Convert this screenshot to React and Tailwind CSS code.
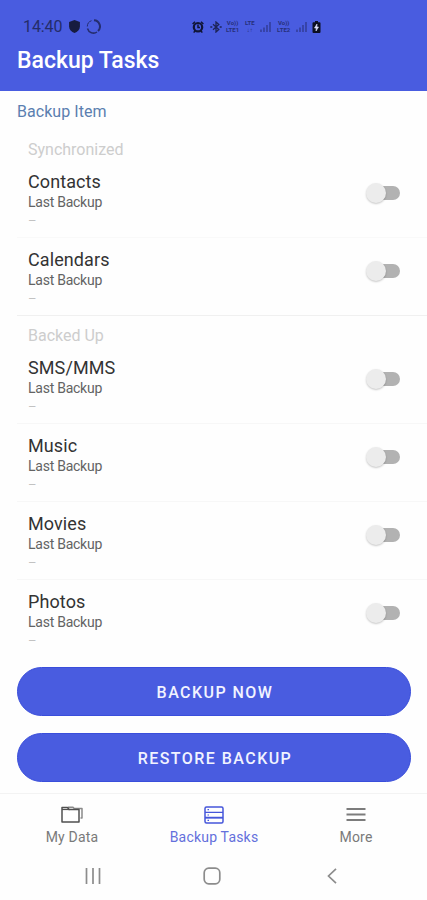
import { useState } from 'react'

const SYNCED = ['Contacts', 'Calendars']
const BACKED_UP = ['SMS/MMS', 'Music', 'Movies', 'Photos']

function ShieldIcon() {
  return (
    <svg width="11" height="13" viewBox="0 0 10 12" fill="#171c3f">
      <path d="M5 0 10 1.8V6c0 3-2.200 5-5 6C2.200 11 0 9 0 6V1.800z" />
    </svg>
  )
}

function SyncIcon() {
  return (
    <svg width="15" height="15" viewBox="0 0 15 15" fill="none" stroke="#252d6e">
      <path d="M8 1.300A6.200 6.200 0 0 1 12 12" strokeWidth="2" />
      <path d="M11 13A6.200 6.200 0 0 1 1.500 9.500" strokeWidth="1.500" />
      <path d="M1.300 7.500A6.200 6.200 0 0 1 5.500 1.700" strokeWidth="1" />
    </svg>
  )
}

function AlarmIcon() {
  return (
    <svg width="12" height="12" viewBox="0 0 12 12" fill="none" stroke="#101536">
      <circle cx="6" cy="6.200" r="4.200" strokeWidth="2.200" />
      <path d="M6 3.500v3h2M.6 3 3 .8M11.400 3 9 .8M1.600 11.500l1.600-1.500M10.400 11.500 8.800 10" strokeWidth="1.500" />
    </svg>
  )
}

function BluetoothIcon() {
  return (
    <svg width="12" height="12" viewBox="0 0 12 12" fill="none" stroke="#1c2355" strokeWidth="1.300">
      <path d="M3 3.300 8.800 8.400 6 11V1l2.800 2.600L3 8.700" />
      <path d="M.3 6h2M9.700 6h2" strokeWidth="1.700" />
    </svg>
  )
}

function SignalIcon() {
  return (
    <svg width="11" height="10" viewBox="0 0 11 10" stroke="#2e388c" strokeWidth="1.300">
      <path d="M1 10V7.500M4 10V5.500M7 10V3M10 10V0" />
    </svg>
  )
}

function BatteryIcon() {
  return (
    <svg width="9" height="12" viewBox="0 0 9 12">
      <path d="M3 0h3v1.300h1.500a1 1 0 0 1 1 1V11a1 1 0 0 1-1 1h-6a1 1 0 0 1-1-1V2.300a1 1 0 0 1 1-1H3z" fill="#0c0f22" />
      <path d="M5 3 2.500 7h1.700L4 10l2.500-4H4.800z" fill="#dfe3ff" stroke="#dfe3ff" strokeWidth=".6" />
    </svg>
  )
}

function NetLabel({ top, bottom }) {
  return (
    <div className="flex flex-col items-center gap-px text-[6px] leading-[6px] font-bold text-[#262f78]">
      <span className="block h-[6px]">{top}</span>
      <span className="block h-[6px]">{bottom}</span>
    </div>
  )
}

function FoldersIcon() {
  return (
    <svg width="22" height="17" viewBox="0 0 22 17" fill="none" strokeLinejoin="round">
      <path d="M7 1.200h5l1.200 1.300H21V12h-1.500" stroke="#8a8a8a" strokeWidth="1.500" />
      <path d="M1 1.500h5.500L8 3.500h10V16H1z" stroke="#505050" strokeWidth="1.500" />
      <path d="M1 3.500h8" stroke="#505050" strokeWidth="1.200" />
    </svg>
  )
}

function TasksIcon() {
  return (
    <svg width="20" height="18" viewBox="0 0 20 18" fill="none" stroke="#4556da" strokeWidth="1.500">
      <rect x="1" y="1" width="18" height="16" rx="1.500" />
      <path d="M1 6.300h18M3.500 3.700h1.500M3.500 9h1.500M3.500 14.300h1.500" strokeWidth="1.200" />
      <path d="M1 11.700h18" strokeWidth="1.900" />
    </svg>
  )
}

function MenuIcon() {
  return (
    <svg width="20" height="15" viewBox="0 0 20 15" stroke="#7c7c7c" strokeWidth="1.800">
      <path d="M.5 2h19M.5 7.500h19M.5 13h19" />
    </svg>
  )
}

function Toggle({ on, onClick }) {
  return (
    <button onClick={onClick} className="relative w-[34px] h-[22px] flex items-center justify-end">
      <span className={`w-[26px] h-[14px] rounded-full ${on ? 'bg-[#a4adf0]' : 'bg-[#b2b2b2]'}`} />
      <span
        className={`absolute top-px w-5 h-5 rounded-full shadow-[0_1px_2px_rgba(0,0,0,0.22)] ${
          on ? 'right-0 bg-[#495ce0]' : 'left-0 bg-[#ececec]'
        }`}
      />
    </button>
  )
}

function TaskRow({ name, on, onToggle, border }) {
  return (
    <div className={`h-[78px] ml-[17px] pl-[11px] pr-[27px] pt-[10px] flex justify-between border-b ${border}`}>
      <div>
        <p className="h-[23px] text-[18px] leading-6 tracking-[0.1px] text-[#333]">{name}</p>
        <p className="text-[14px] leading-[18px] tracking-[-0.25px] text-[#636363]">Last Backup</p>
        <p className="pt-px text-[13px] leading-[18px] text-[#c2c2c2]">–</p>
      </div>
      <div className="pt-3">
        <Toggle on={on} onClick={onToggle} />
      </div>
    </div>
  )
}

export default function App() {
  const [enabled, setEnabled] = useState({})

  function toggle(name) {
    setEnabled(prev => ({ ...prev, [name]: !prev[name] }))
  }

  return (
    <div className="w-full h-[900px] flex flex-col overflow-hidden bg-[#fefefe] font-[Roboto,sans-serif]">
      <header className="h-[91px] shrink-0 bg-[#495ce0]">
        <div className="h-[38px] pt-[15px] pl-[23px] flex items-center">
          <span className="w-[46px] text-[16px] leading-6 tracking-[-0.1px] text-[#242c69]">14:40</span>
          <ShieldIcon />
          <div className="ml-[6px]"><SyncIcon /></div>
          <div className="ml-[91px] flex items-center gap-[6px]">
            <AlarmIcon />
            <BluetoothIcon />
          </div>
          <div className="ml-[4px] w-[81px] flex items-center justify-between">
            <NetLabel top="Vo))" bottom="LTE1" />
            <NetLabel top="LTE" bottom="↓↑" />
            <SignalIcon />
            <NetLabel top="Vo))" bottom="LTE2" />
            <SignalIcon />
          </div>
          <div className="ml-[5px]"><BatteryIcon /></div>
        </div>
        <h1 className="pl-[17px] pt-2 text-[23px] leading-[30px] font-medium text-white">Backup Tasks</h1>
      </header>

      <main className="h-[568px] shrink-0">
        <h2 className="h-[49px] pl-[17px] pt-[9px] text-[16px] leading-6 tracking-[0.05px] text-[#5b7fb0]">Backup Item</h2>
        <p className="h-5 pl-7 text-[16px] leading-5 text-[#cdcdcd]">Synchronized</p>
        {SYNCED.map((name, i) => (
          <TaskRow
            key={name}
            name={name}
            on={!!enabled[name]}
            onToggle={() => toggle(name)}
            border={i === SYNCED.length - 1 ? 'border-[#f0f0f0]' : 'border-[#f9f9f9]'}
          />
        ))}
        <p className="h-[30px] pl-7 pt-[10px] text-[16px] leading-5 text-[#cdcdcd]">Backed Up</p>
        {BACKED_UP.map((name, i) => (
          <TaskRow
            key={name}
            name={name}
            on={!!enabled[name]}
            onToggle={() => toggle(name)}
            border={i === BACKED_UP.length - 1 ? 'border-transparent' : 'border-[#f7f7f7]'}
          />
        ))}
      </main>

      <div className="h-[134px] shrink-0 pl-[17px] pr-4 pt-2 flex flex-col gap-[17px]">
        <button className="h-[49px] pt-0.5 pl-0.5 rounded-full bg-[#495ce0] border border-[#3a4edb] text-[16px] font-medium tracking-[1.45px] text-[#f1f3ff]">
          BACKUP NOW
        </button>
        <button className="h-[49px] pt-0.5 pl-0.5 rounded-full bg-[#495ce0] border border-[#3a4edb] text-[16px] font-medium tracking-[1.45px] text-[#f1f3ff]">
          RESTORE BACKUP
        </button>
      </div>

      <nav className="h-[59px] shrink-0 pl-px border-t border-[#f3f3f3] grid grid-cols-3 text-[14px] leading-5 tracking-[0.2px] text-[#7a7a7a]">
        <button className="flex flex-col items-center">
          <span className="h-[33px] pt-3"><FoldersIcon /></span>
          My Data
        </button>
        <button className="flex flex-col items-center text-[#6470dc]">
          <span className="h-[33px] pt-3"><TasksIcon /></span>
          Backup Tasks
        </button>
        <button className="flex flex-col items-center">
          <span className="h-[33px] pt-[13px]"><MenuIcon /></span>
          More
        </button>
      </nav>

      <div className="h-12 shrink-0 pl-[84px] flex items-center">
        <svg width="18" height="16" viewBox="0 0 18 16" stroke="#8c8c8c" strokeWidth="1.700">
          <path d="M2.500 0v16M9 0v16M15.500 0v16" />
        </svg>
        <svg className="ml-[101px]" width="18" height="18" viewBox="0 0 18 18" fill="none" stroke="#8c8c8c" strokeWidth="1.700">
          <rect x="1.200" y="1.200" width="15.600" height="15.600" rx="4.500" />
        </svg>
        <svg className="ml-[106px]" width="10" height="16" viewBox="0 0 10 16" fill="none" stroke="#8c8c8c" strokeWidth="1.700">
          <path d="M9 .8 1.500 8 9 15.200" />
        </svg>
      </div>
    </div>
  )
}
